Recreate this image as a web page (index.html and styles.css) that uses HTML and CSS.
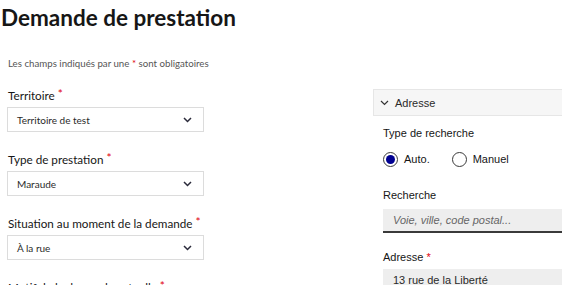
FILE: index.html
```html
<!DOCTYPE html>
<html lang="fr">

<head>
    <meta charset="UTF-8">
    <meta name="viewport" content="width=device-width, initial-scale=1.0">
    <title>Demande de prestation</title>
    <link rel="stylesheet" href="styles.css">
</head>

<body>
    <h1 class="title">Demande de prestation</h1>
    <p class="hint">Les champs indiqués par une <span class="req">*</span> sont obligatoires</p>

    <div class="form">
        <div class="col-left">
            <div class="field">
                <label class="label">Territoire <span class="req">*</span></label>
                <div class="select">
                    <span>Territoire de test</span>
                    <svg width="9" height="6" viewBox="0 0 9 6"><path d="M1 1l3.5 3.5 3.5-3.5" fill="none" stroke="#2a2a3a" stroke-width="1.5"/></svg>
                </div>
            </div>
            <div class="field">
                <label class="label">Type de prestation <span class="req">*</span></label>
                <div class="select">
                    <span>Maraude</span>
                    <svg width="9" height="6" viewBox="0 0 9 6"><path d="M1 1l3.5 3.5 3.5-3.5" fill="none" stroke="#2a2a3a" stroke-width="1.5"/></svg>
                </div>
            </div>
            <div class="field">
                <label class="label">Situation au moment de la demande <span class="req">*</span></label>
                <div class="select">
                    <span>À la rue</span>
                    <svg width="9" height="6" viewBox="0 0 9 6"><path d="M1 1l3.5 3.5 3.5-3.5" fill="none" stroke="#2a2a3a" stroke-width="1.5"/></svg>
                </div>
            </div>
            <div class="field">
                <label class="label">Motif de la demande actuelle <span class="req">*</span></label>
            </div>
        </div>

        <div class="col-right">
            <div class="acc-head">
                <svg width="9" height="6" viewBox="0 0 9 6"><path d="M1 1l3.5 3.5 3.5-3.5" fill="none" stroke="#333" stroke-width="1.2"/></svg>
                <span>Adresse</span>
            </div>
            <div class="acc-body">
                <div class="sub-label">Type de recherche</div>
                <div class="radios">
                    <label class="radio"><span class="dot on"></span>Auto.</label>
                    <label class="radio"><span class="dot"></span>Manuel</label>
                </div>
                <div class="sub-label gap">Recherche</div>
                <div class="input placeholder">Voie, ville, code postal...</div>
                <div class="sub-label gap2">Adresse <span class="req">*</span></div>
                <div class="input">13 rue de la Liberté</div>
            </div>
        </div>
    </div>
</body>

</html>
```

FILE: styles.css
```css
body {
    margin: 0;
    font-family: "Lato", "Noto Sans", sans-serif;
    color: #161616;
    background: #fff;
    overflow: hidden;
}

.title {
    margin: 0;
    padding: 1px 0 0 1px;
    font-size: 22.5px;
    line-height: 34px;
    font-weight: 700;
}

.hint {
    margin: 21px 0 0 8px;
    font-size: 9.7px;
    line-height: 14px;
    color: #555;
}

.req {
    color: #e1000f;
}

.label .req {
    position: relative;
    top: -2px;
    font-size: 12px;
    line-height: 0;
}

.form {
    display: grid;
    grid-template-columns: 197px 1fr;
    column-gap: 169px;
    padding-left: 7px;
}

.col-left {
    padding-top: 17px;
}

.field {
    margin-bottom: 19px;
}

.label {
    display: block;
    font-size: 11.7px;
    line-height: 17px;
    height: 17px;
    margin-bottom: 3px;
    padding-left: 1px;
    white-space: nowrap;
}

.select {
    display: flex;
    align-items: center;
    justify-content: space-between;
    height: 25px;
    box-sizing: border-box;
    border: 1px solid #dcdcdc;
    padding: 0 11px 0 9px;
    font-size: 10px;
    color: #2a2a2a;
}

.col-right {
    padding-top: 19px;
}

.acc-head {
    display: flex;
    align-items: center;
    gap: 6px;
    height: 27px;
    box-sizing: border-box;
    background: #f6f6f6;
    border: 1px solid #e6e6e6;
    border-right: none;
    padding-left: 6px;
    font-family: "Liberation Sans", Arial, sans-serif;
    font-size: 11px;
    color: #2a2a2a;
}

.acc-body {
    padding-left: 10px;
    font-family: "Liberation Sans", Arial, sans-serif;
}

.sub-label {
    margin-top: 9px;
    font-size: 11px;
    line-height: 16px;
}

.sub-label.gap {
    margin-top: 19px;
    margin-bottom: 6px;
}

.sub-label.gap2 {
    margin-top: 16px;
    margin-bottom: 4px;
}

.radios {
    display: flex;
    gap: 22px;
    margin-top: 9px;
    height: 18px;
    align-items: center;
}

.radio {
    display: flex;
    align-items: center;
    gap: 6px;
    font-size: 11px;
}

.dot {
    width: 15px;
    height: 15px;
    box-sizing: border-box;
    border: 1px solid #3a3a3a;
    border-radius: 50%;
    display: flex;
    align-items: center;
    justify-content: center;
}

.dot.on::after {
    content: "";
    width: 9px;
    height: 9px;
    border-radius: 50%;
    background: #000091;
}

.input {
    height: 24px;
    box-sizing: border-box;
    background: #eeeeee;
    border-bottom: 2px solid #3a3a3a;
    padding-left: 10px;
    display: flex;
    align-items: center;
    font-size: 11px;
    color: #2a2a2a;
}

.input.placeholder {
    font-style: italic;
    color: #666;
}
```
